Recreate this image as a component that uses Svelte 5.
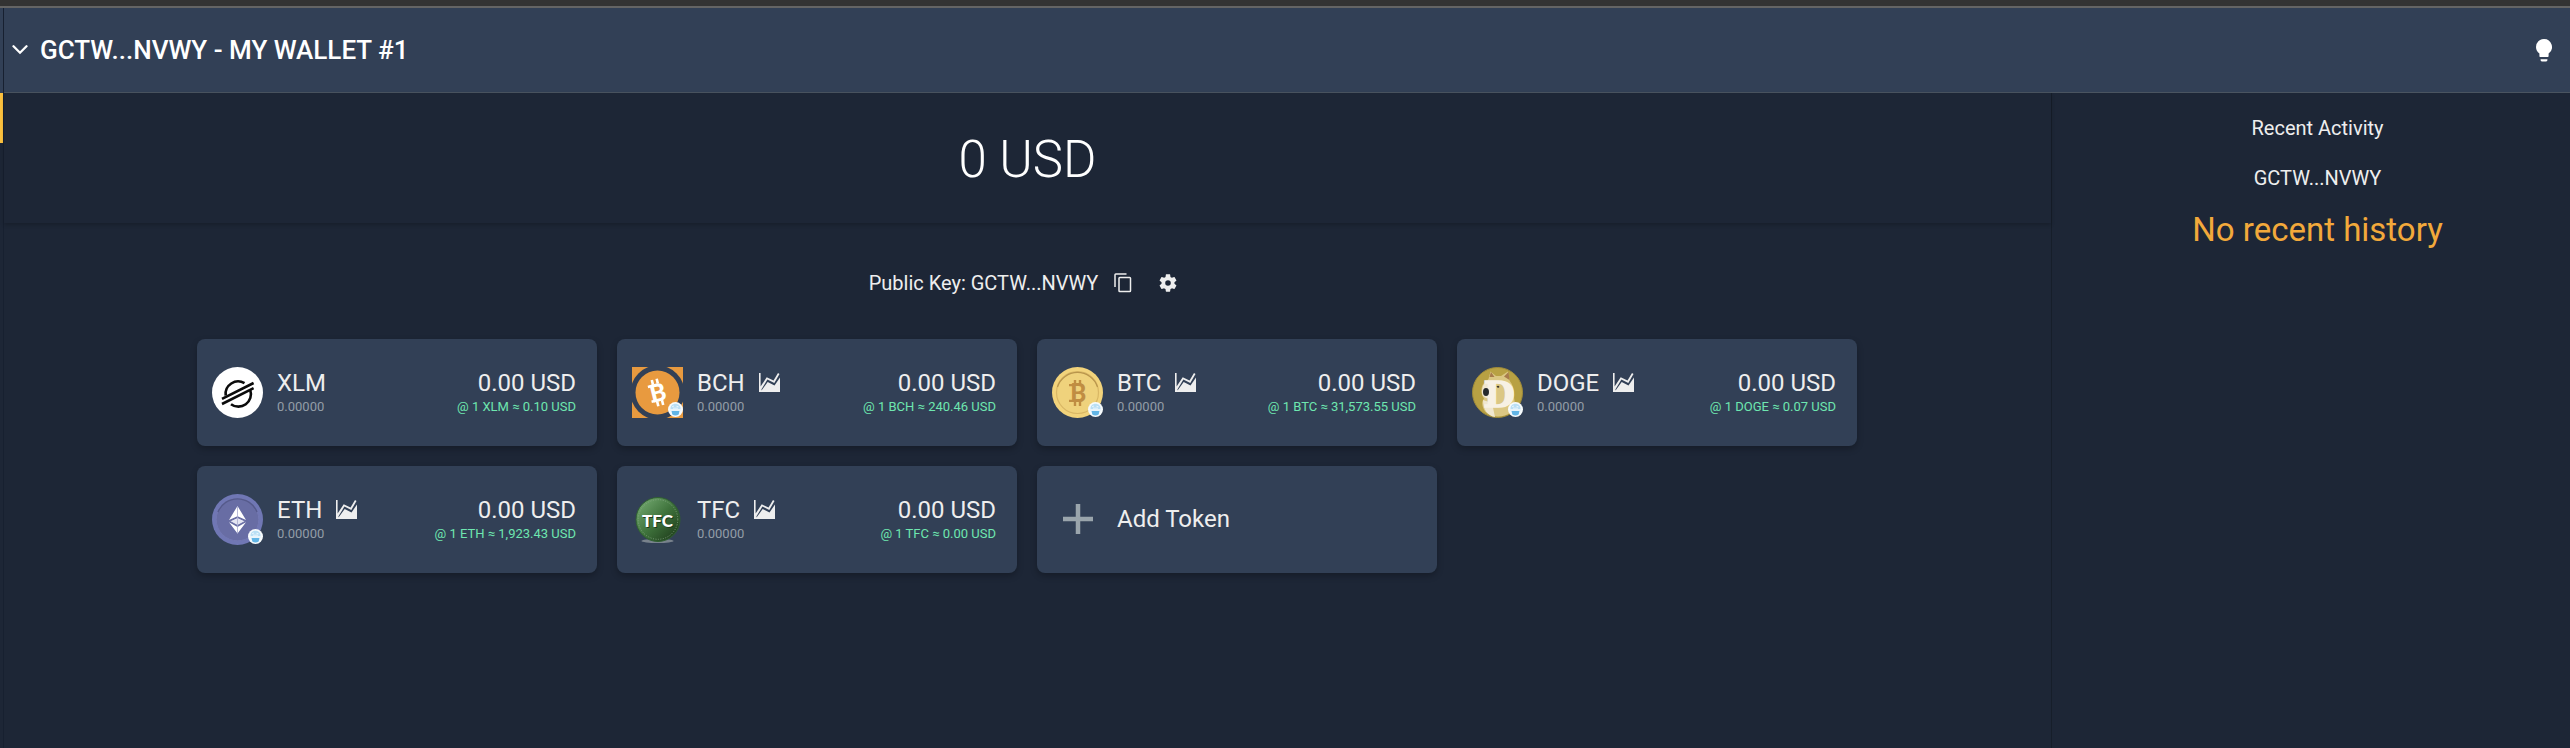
<script>
  const tokens = [
    { code: 'XLM', rate: '0.10', chart: false, badge: false },
    { code: 'BCH', rate: '240.46', chart: true, badge: true },
    { code: 'BTC', rate: '31,573.55', chart: true, badge: true },
    { code: 'DOGE', rate: '0.07', chart: true, badge: true },
    { code: 'ETH', rate: '1,923.43', chart: true, badge: true },
    { code: 'TFC', rate: '0.00', chart: true, badge: false }
  ];
</script>

<div class="app">
  <div class="strip"></div>
  <div class="shell">
    <aside class="rail">
      <div class="rail-head"></div>
      <div class="rail-active"></div>
    </aside>
    <div class="content">
      <header class="topbar">
        <button class="wallet" type="button">
          <svg width="16" height="10" viewBox="0 0 16 10" aria-hidden="true">
            <path d="M1.500 1.300 8 7.700l6.500-6.400" fill="none" stroke="currentColor" stroke-width="2.300" stroke-linecap="round" />
          </svg>
          <span>GCTW...NVWY - MY WALLET #1</span>
        </button>
        <button class="icon-button" type="button" aria-label="Theme">
          <svg width="16" height="23" viewBox="0 0 16 23" fill="currentColor" aria-hidden="true">
            <path d="M8 0a8 8 0 0 0-8 8c0 2.700 1.300 5 3.400 6.500V17c0 .7.4 1 1 1h7.200c.6 0 1-.3 1-1v-2.500A8 8 0 0 0 8 0z" />
            <path d="M4.600 20.300h6.800v.8c0 .8-.5 1.300-1.300 1.300H5.900c-.8 0-1.300-.5-1.300-1.300z" />
          </svg>
        </button>
      </header>
      <div class="body">
        <main>
          <section class="hero"><h1>0 USD</h1></section>
          <section class="holdings">
            <div class="key">
              <span>Public Key: GCTW...NVWY</span>
              <button class="icon-button" type="button" aria-label="Copy public key">
                <svg width="18" height="20" viewBox="0 0 18 20" fill="none" stroke="currentColor" stroke-width="1.500" aria-hidden="true">
                  <path d="M1 14V1.800Q1 1 1.800 1H12.500" />
                  <rect x="5" y="4.500" width="11.500" height="14" rx="0.800" />
                </svg>
              </button>
              <button class="icon-button gear" type="button" aria-label="Settings">
                <svg width="18" height="18" viewBox="2 2 20 20" fill="currentColor" aria-hidden="true">
                  <path d="M19.140 12.940c.04-.3.060-.61.060-.94 0-.32-.02-.64-.07-.94l2.030-1.580c.18-.14.230-.41.120-.61l-1.920-3.320c-.12-.22-.37-.29-.59-.22l-2.390.96c-.5-.38-1.030-.7-1.620-.94l-.36-2.540c-.04-.24-.24-.41-.48-.41h-3.840c-.24 0-.43.17-.47.41l-.36 2.540c-.59.24-1.130.57-1.620.94l-2.390-.96c-.22-.08-.47 0-.59.22L2.740 8.870c-.12.210-.08.470.12.610l2.030 1.580c-.05.3-.09.630-.09.940s.02.640.070.940l-2.030 1.580c-.18.140-.23.410-.12.610l1.920 3.320c.12.220.370.290.590.220l2.390-.96c.5.380 1.030.7 1.620.94l.36 2.540c.05.240.240.410.480.410h3.840c.24 0 .44-.17.470-.41l.36-2.540c.59-.24 1.130-.56 1.620-.94l2.390.96c.22.080.470 0 .59-.22l1.920-3.320c.12-.22.070-.47-.12-.61l-2.010-1.580zM12 15.100A3.100 3.100 0 1 1 12 8.900a3.100 3.100 0 0 1 0 6.200z" />
                </svg>
              </button>
            </div>
            <div class="grid">
              {#each tokens as token (token.code)}
                <article class="card">
                  <div class="coin">
                    {#if token.code === 'XLM'}
                      <svg viewBox="0 0 51 51" aria-hidden="true">
                        <circle cx="25.500" cy="25.500" r="25.500" fill="#fff" />
                        <g fill="none" stroke="#0b0b0b" stroke-width="2.600">
                          <path d="M13.700 28.500A12.500 12.500 0 0 1 32.500 16.200" />
                          <path d="M38.300 23.200A12.500 12.500 0 0 1 19 37.200" />
                          <path d="M10 31.900 41.600 16M10 37 41.600 21.100" />
                        </g>
                      </svg>
                    {:else if token.code === 'BCH'}
                      <svg viewBox="0 0 51 51" aria-hidden="true">
                        <rect width="51" height="51" fill="#e89a3f" />
                        <clipPath id="bch-edge"><rect width="51" height="51" /></clipPath>
                        <circle cx="25.500" cy="25.500" r="27" fill="#324056" clip-path="url(#bch-edge)" />
                        <circle cx="25.500" cy="25.500" r="22" fill="#e89a3f" />
                        <g transform="rotate(-14 25.500 25.500)">
                          <path d="M23 12v5M28 12v5M23 34v5M28 34v5M17.500 17.900h5M17.500 33.100h5" stroke="#fff" stroke-width="2.600" />
                          <text x="26" y="34.500" text-anchor="middle" class="glyph" font-size="25" fill="#fff">B</text>
                        </g>
                      </svg>
                    {:else if token.code === 'BTC'}
                      <svg viewBox="0 0 51 51" aria-hidden="true">
                        <circle cx="25.500" cy="25.500" r="25.500" fill="#f2d37b" />
                        <circle cx="25.500" cy="25.500" r="21" fill="#efd27c" stroke="#d9b765" stroke-width="1.200" />
                        <path d="M5.500 20a21 21 0 0 1 40 0" fill="none" stroke="#b9954c" stroke-width="1.200" />
                        <path d="M23 13v5M28 13v5M23 34v5M28 34v5M17 18.100h6M17 33.900h6" stroke="#c08d42" stroke-width="2.400" />
                        <text x="26.500" y="35" text-anchor="middle" class="glyph" font-size="25" fill="#c08d42">B</text>
                      </svg>
                    {:else if token.code === 'DOGE'}
                      <svg viewBox="0 0 51 51" aria-hidden="true">
                        <circle cx="25.500" cy="25.500" r="25" fill="#b8a143" stroke="#a18c3a" />
                        <path d="M16.500 12 18.500 4.500 24 9h5l7-4.500 1.500 9c4 5 5 11 4.500 17 1.500 7 1 11-3 15-8 5-18 6-26-1-3-5-4-9-1-13-4-5-3-14 1-16z" fill="#dbc783" />
                        <path d="M17.500 10 19 5l3.500 5zM32 9.500l4.500-4.500 1 8z" fill="#a87b4c" />
                        <path d="M11 19c2-4 5-5 8-5v17c-3 1-6 0-8-2-2-3-1-7 0-10zM11 33l9 3 3 14c-7-1-12-7-12-17z" fill="#f0e7cf" />
                        <text x="27" y="39.500" text-anchor="middle" class="doge-text" fill="#f7f1e4" stroke="#f7f1e4" stroke-width="1.500">D</text>
                        <ellipse cx="14" cy="25" rx="3" ry="4" fill="#262a2c" />
                        <path d="M24.500 19.500q2-1.500 3 .5l-1.500 1z" fill="#3b352b" />
                      </svg>
                    {:else if token.code === 'ETH'}
                      <svg viewBox="0 0 51 51" aria-hidden="true">
                        <circle cx="25.500" cy="25.500" r="25.500" fill="#7077b4" />
                        <circle cx="25.500" cy="25.500" r="21.300" fill="#686da4" stroke="#7378b3" />
                        <path d="M6 18a21 21 0 0 1 39 0" fill="none" stroke="#555a8b" stroke-width="1.300" />
                        <path d="M25.500 12 17 26l8.500-3.800L34 26z" fill="#fff" />
                        <path d="M17.500 27.200 25.500 23.500l8 3.700-8 4.300z" fill="#e4e5f2" stroke="#686da4" />
                        <path d="m17 28.200 8.500 4.800 8.500-4.800-8.500 11.300z" fill="#fff" />
                        <path d="M25.500 12v27.500" stroke="#a8abcf" stroke-width="0.800" />
                      </svg>
                    {:else}
                      <svg viewBox="0 0 51 51" aria-hidden="true">
                        <defs>
                          <linearGradient id="tfc-face" x1="0" y1="0" x2="1" y2="1">
                            <stop offset="0.100" stop-color="#6fa56c" />
                            <stop offset="0.500" stop-color="#3f733c" />
                            <stop offset="0.900" stop-color="#203f1d" />
                          </linearGradient>
                        </defs>
                        <ellipse cx="25.500" cy="47" rx="16" ry="2" fill="#78828c" />
                        <circle cx="26" cy="25.500" r="22" fill="url(#tfc-face)" stroke="#2f5f31" />
                        <circle cx="26" cy="25.500" r="19.800" fill="none" stroke="#86a884" stroke-width="0.800" stroke-dasharray="1 1.500" />
                        <text x="26.500" y="33.500" text-anchor="middle" class="coin-text" fill="#1d3b1c">TFC</text>
                        <text x="25.500" y="32.500" text-anchor="middle" class="coin-text" fill="#fff">TFC</text>
                      </svg>
                    {/if}
                    {#if token.badge}
                      <svg class="badge" viewBox="0 0 15 15" aria-hidden="true">
                        <circle cx="7.500" cy="7.500" r="7.500" fill="#f7fbfd" />
                        <path d="M2.500 7C2.200 4 4.500 1.800 7.500 1.800S12.800 4 12.500 7z" fill="#b9dff5" />
                        <path d="M4 4.800 6 4M8.500 4.300l2 .5M5 6.200h5" stroke="#fff" stroke-width="0.700" />
                        <path d="M2.200 7.500h10.600v1H2.200z" fill="#d8ecf8" />
                        <path d="M3.500 9h8l-.8 3.500q-3.200 1.800-6.400 0z" fill="#62b5e6" />
                      </svg>
                    {/if}
                  </div>
                  <div class="name">
                    <div class="line">
                      <span>{token.code}</span>
                      {#if token.chart}
                        <button class="icon-button" type="button" aria-label="{token.code} chart">
                          <svg width="21" height="19" viewBox="0 0 21 19" fill="currentColor" aria-hidden="true">
                            <path d="M0 0h1.600v13.500L7.700 4.300l6.800 3.300L19 0l1.500 1-5.200 9L8.400 6.600 2.500 16.200V17.500L8.700 9l6.800 3.500L21 4.500V19H0z" />
                          </svg>
                        </button>
                      {/if}
                    </div>
                    <div class="small muted">0.00000</div>
                  </div>
                  <div class="value">
                    <div class="line">0.00 USD</div>
                    <div class="small rate">@ 1 {token.code} ≈ {token.rate} USD</div>
                  </div>
                </article>
              {/each}
              <button class="card add" type="button">
                <span class="coin plus">
                  <svg width="30" height="30" viewBox="0 0 30 30" aria-hidden="true">
                    <path d="M15 0v30M0 15h30" stroke="#9aa5ac" stroke-width="4.500" />
                  </svg>
                </span>
                <span>Add Token</span>
              </button>
            </div>
          </section>
        </main>
        <aside class="activity">
          <h2>Recent Activity</h2>
          <p>GCTW...NVWY</p>
          <p class="empty">No recent history</p>
        </aside>
      </div>
    </div>
  </div>
</div>

<style>
  :global(body) {
    background: #1d2636;
  }
  .app {
    display: flex;
    flex-direction: column;
    min-height: 100vh;
    background: #1d2636;
    color: #eee;
    font-family: Roboto, sans-serif;
    font-size: 20px;
    line-height: 24px;
  }
  button {
    margin: 0;
    padding: 0;
    border: 0;
    background: none;
    color: inherit;
    font: inherit;
    cursor: pointer;
  }
  svg {
    display: block;
  }
  h1,
  h2,
  p {
    margin: 0;
    font-weight: 400;
  }
  .strip {
    height: 6px;
    background: #333;
    border-bottom: 2px solid #646464;
  }
  .shell,
  .body {
    display: flex;
    flex: 1;
  }
  .rail {
    width: 3px;
    border-right: 1px solid #172030;
  }
  .rail-head {
    height: 85px;
    background: #324056;
  }
  .rail-active {
    height: 50px;
    background: #fdc23f;
  }
  .content {
    display: flex;
    flex: 1;
    flex-direction: column;
  }
  .topbar {
    display: flex;
    align-items: center;
    justify-content: space-between;
    height: 84px;
    padding: 0 18px 0 8px;
    border-bottom: 1px solid #4a5460;
    background: #324056;
    color: #fff;
  }
  .wallet {
    display: flex;
    align-items: center;
    gap: 12px;
    font-size: 26px;
    font-weight: 500;
  }
  main {
    flex: 1;
    border-right: 1px solid #161e2a;
  }
  .hero {
    display: flex;
    align-items: center;
    justify-content: center;
    box-sizing: border-box;
    height: 130px;
    padding-top: 4px;
    box-shadow: 0 2px 4px rgba(0, 0, 0, 0.2);
  }
  h1 {
    color: #fff;
    font-size: 51px;
    font-weight: 300;
    line-height: 60px;
  }
  .holdings {
    padding: 48px 21px 48px 20px;
  }
  .key {
    display: flex;
    align-items: center;
    justify-content: center;
    gap: 16px;
    margin-bottom: 44px;
    padding-right: 8px;
  }
  .gear {
    margin-left: 11px;
  }
  .grid {
    display: grid;
    grid-template-columns: repeat(auto-fill, 400px);
    gap: 20px;
    justify-content: center;
    max-width: 1660px;
    margin: 0 auto;
  }
  .card {
    display: flex;
    align-items: center;
    gap: 14px;
    box-sizing: border-box;
    height: 107px;
    padding: 0 21px 0 15px;
    border-radius: 8px;
    background: #324056;
    box-shadow: 0 3px 6px rgba(0, 0, 0, 0.25);
    font-size: 24px;
    text-align: left;
  }
  .add {
    padding-bottom: 2px;
  }
  .coin {
    position: relative;
    width: 51px;
    height: 51px;
  }
  .plus {
    display: flex;
    align-items: center;
    justify-content: center;
  }
  .badge {
    position: absolute;
    right: 0;
    bottom: 1px;
    width: 15px;
    height: 15px;
  }
  .glyph {
    font-family: Roboto, sans-serif;
    font-weight: 700;
  }
  .doge-text {
    font-family: "DejaVu Serif", serif;
    font-size: 36px;
    font-weight: 700;
  }
  .coin-text {
    font-family: Lato, sans-serif;
    font-size: 17px;
    font-weight: 900;
  }
  .name {
    flex: 1;
  }
  .line {
    display: flex;
    align-items: center;
    gap: 14px;
    line-height: 28px;
  }
  .value .line {
    justify-content: flex-end;
  }
  .small {
    font-size: 13px;
    line-height: 20px;
  }
  .muted {
    color: #929da7;
  }
  .rate {
    color: #6ee7b0;
    text-align: right;
  }
  .activity {
    box-sizing: border-box;
    width: 518px;
    padding: 23px 0 0 13px;
    text-align: center;
  }
  .activity h2 {
    margin-bottom: 26px;
    font-size: 20px;
  }
  .activity .empty {
    margin-top: 20px;
    color: #f2a93b;
    font-size: 33px;
    line-height: 40px;
  }
</style>
